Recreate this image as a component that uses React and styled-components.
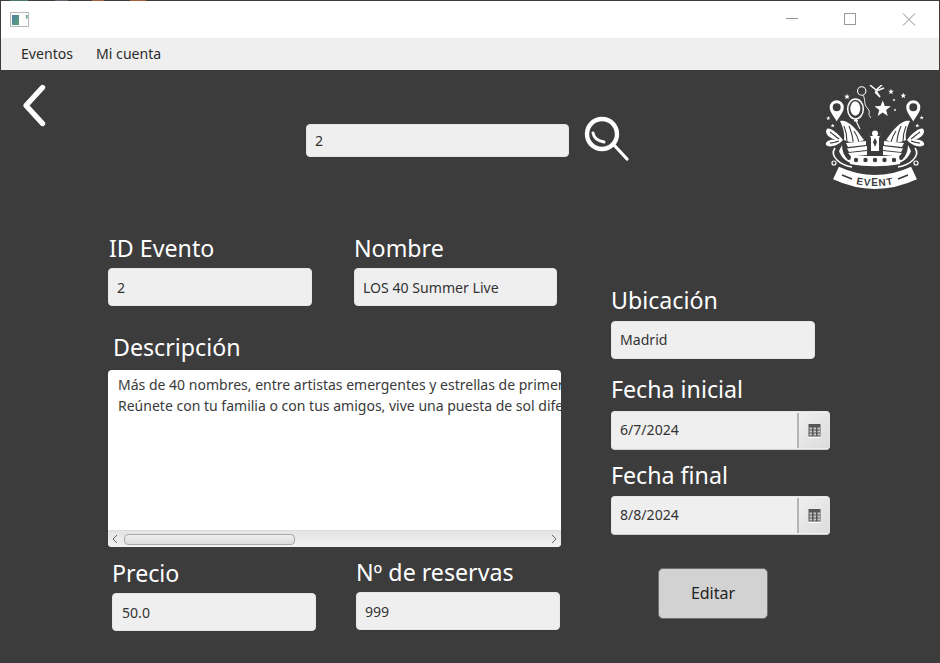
import React from "react";
import styled, { createGlobalStyle } from "styled-components";

const Global = createGlobalStyle`
  html, body { margin: 0; padding: 0; background: #3c3c3c; }
  * { box-sizing: border-box; }
`;

const FONT = `"Noto Sans", "Open Sans", sans-serif`;

const Win = styled.div`
  width: 940px;
  height: 663px;
  display: flex;
  flex-direction: column;
  background: #3c3c3c;
  font-family: ${FONT};
  color: #333;
  overflow: hidden;
`;
const TopEdge = styled.div`
  height: 1px;
  flex: none;
  background: linear-gradient(90deg, #3c3c3c 0 10px, #4d7a6a 10px 28px, #3c3c3c 28px 55px, #6a5f70 55px 68px, #3c3c3c 68px 92px, #a5603a 92px 104px, #3c3c3c 104px 130px, #a5603a 130px 146px, #3c3c3c 146px 940px);
`;
const TitleBar = styled.div`
  height: 37px;
  flex: none;
  margin: 0 1px;
  background: #fff;
  display: flex;
  align-items: center;
  padding-left: 9px;
`;
const Controls = styled.div`
  margin-left: auto;
  display: flex;
`;
const Ctrl = styled.svg`
  width: ${(p) => p.$w || 58}px;
  height: 37px;
  display: block;
`;
const MenuBar = styled.nav`
  height: 32px;
  flex: none;
  margin: 0 1px;
  background: #efefef;
  display: flex;
  align-items: center;
  gap: 23px;
  padding: 0 0 2px 20px;
  font-size: 14.1px;
  color: #2b2b2b;
`;
const Content = styled.main`
  flex: 1;
  display: flex;
  flex-direction: column;
`;
const Header = styled.header`
  height: 162px;
  flex: none;
  display: flex;
  align-items: flex-start;
`;
const BackIcon = styled.svg`
  width: 30px;
  height: 50px;
  margin: 12px 0 0 20px;
  flex: none;
`;
const SearchGroup = styled.div`
  display: flex;
  align-items: flex-start;
  margin: 54px 0 0 256px;
`;
const SearchBox = styled.div`
  width: 263px;
`;
const SearchIcon = styled.svg`
  width: 50px;
  height: 50px;
  margin: -9px 0 0 14px;
  flex: none;
`;
const Logo = styled.svg`
  width: 115px;
  height: 110px;
  margin: 15px 15px 0 auto;
  flex: none;
`;
const Form = styled.div`
  display: flex;
  padding-left: 108px;
  gap: 50px;
`;
const LeftCol = styled.div`
  width: 453px;
  display: flex;
  flex-direction: column;
`;
const RightCol = styled.div`
  width: 219px;
  margin-top: 52px;
  display: flex;
  flex-direction: column;
`;
const FieldRow = styled.div`
  display: flex;
  align-items: flex-start;
  margin-top: ${(p) => p.$top || 0}px;
  padding-left: ${(p) => p.$indent || 0}px;
`;
const Field = styled.div`
  width: ${(p) => p.$w || 204}px;
  margin-left: ${(p) => p.$left || 0}px;
`;
const Label = styled.label`
  display: block;
  font-size: 23.2px;
  line-height: 32px;
  height: ${(p) => p.$h || 36}px;
  padding-left: ${(p) => p.$indent || 0}px;
  margin-top: ${(p) => p.$top || 0}px;
  color: #fff;
  white-space: nowrap;
`;
const Input = styled.div`
  height: ${(p) => p.$h || 38}px;
  width: 100%;
  display: flex;
  align-items: center;
  padding-left: ${(p) => p.$pad || 8}px;
  padding-bottom: ${(p) => p.$lift || 0}px;
  background: #efefef;
  border-radius: 4px;
  border: 1px solid #e6e6e6;
  font-size: 14.1px;
  color: #333;
`;
const TextBox = styled.div`
  height: 177px;
  background: #fff;
  border-radius: 4px;
  overflow: hidden;
  display: flex;
  flex-direction: column;
`;
const TextLines = styled.div`
  flex: 1;
  padding: 4px 0 0 10px;
  font-size: 14.03px;
  line-height: 21px;
  color: #3a3a3a;
  white-space: nowrap;
  overflow: hidden;
`;
const HScroll = styled.div`
  height: 17px;
  flex: none;
  display: flex;
  align-items: center;
  padding: 0 4px;
  background: linear-gradient(#e4e4e4, #f2f2f2);
  border-top: 1px solid #dcdcdc;
`;
const Thumb = styled.div`
  width: 171px;
  height: 11px;
  margin-left: 6px;
  border-radius: 4px;
  border: 1px solid #a9a9a9;
  background: linear-gradient(#efefef, #dcdcdc);
`;
const Arrow = styled.svg`
  width: 6px;
  height: 10px;
  flex: none;
  margin-left: ${(p) => (p.$end ? "auto" : "0")};
`;
const DateBox = styled.div`
  height: 39px;
  display: flex;
  background: #efefef;
  border-radius: 4px;
  border: 1px solid #e6e6e6;
  border-bottom-color: #cfcfcf;
  overflow: hidden;
`;
const DateValue = styled.div`
  flex: 1;
  display: flex;
  align-items: center;
  padding: 0 0 2px 8px;
  font-size: 14.1px;
`;
const DateBtn = styled.div`
  width: 32px;
  display: flex;
  align-items: center;
  justify-content: center;
  margin: 1px 0;
  border-left: 2px solid #b5b5b5;
  background: linear-gradient(135deg, #efefef, #dcdcdc);
`;
const Action = styled.button`
  width: 110px;
  height: 51px;
  margin: 33px 0 0 47px;
  background: #d2d2d2;
  border: 1px solid #6e6e6e;
  border-radius: 5px;
  font-family: ${FONT};
  font-size: 16px;
  color: #222;
  padding: 0 0 2px;
`;

const star = (cx, cy, R, r = R * 0.42) => {
  const pts = [];
  for (let i = 0; i < 10; i++) {
    const a = -Math.PI / 2 + (i * Math.PI) / 5;
    const d = i % 2 ? r : R;
    pts.push(`${(cx + d * Math.cos(a)).toFixed(2)},${(cy + d * Math.sin(a)).toFixed(2)}`);
  }
  return pts.join(" ");
};

const CalIcon = () => (
  <svg width="13" height="14" viewBox="0 0 13 14">
    <rect x="0.5" y="0" width="12" height="12.5" fill="#565656" />
    <rect x="0.5" y="13" width="12" height="1" fill="#fff" />
    <g fill="#c9c9c9">
      {[1, 5, 9].map((x) =>
        [3.5, 6.5, 9.5].map((y) => <rect key={x + "-" + y} x={x + 0.5} y={y} width="2.5" height="2" />)
      )}
    </g>
  </svg>
);

const LogoHalf = () => (
  <g>
    <path fillRule="evenodd" d="M26.7 36.5 C24 31 19.7 27.5 19.7 22.3 A7 7 0 0 1 33.7 22.3 C33.7 27.5 29.5 31 26.7 36.5 Z M26.7 18.3 A4 4 0 1 0 26.7 26.3 A4 4 0 1 0 26.7 18.3 Z" fill="#fff" />
    <path d="M30 36 C37 34 45 42 54 55 C48 58 40 58 34 55 C35 49 33 42 30 36 Z" fill="#fff" />
    <path d="M34 41 C36 46 37 51 37 57 M39 41 C41 46 43 51 43 57 M44 46 C46 49 48 53 49 57" stroke="#3c3c3c" strokeWidth="1.1" fill="none" />
    <path d="M33 55 C27 47 19 42 17 44 C14 47 18 53 26 55 C19 54 15 57 16 60 C19 63 28 61 33 55 Z" fill="#fff" />
    <path d="M20 47 C23 49 26 52 29 54 M20 58 C23 58 26 57 29 56" stroke="#3c3c3c" strokeWidth="1.1" fill="none" />
    <path d="M36 58 L56 56 L56 60 L38 62 Z M37 63.5 L57 61 L57 65 L39 67 Z M38 68 L57 66 L57 70 L41 71.5 Z" fill="#fff" />
    <path d="M32 60 C32 66 34 71 38 75 L44 74 L44 79 C38 78 31 73 29 66 Z" fill="#fff" />
    <path d="M25 63 C22 67 23 71 27 75 C31 79 36 81 42 82" stroke="#fff" strokeWidth="1.6" fill="none" />
    <circle cx="24" cy="78" r="2" fill="none" stroke="#fff" strokeWidth="1.2" />
  </g>
);

const EventLogo = () => (
  <Logo viewBox="0 0 115 110" aria-label="Event">
    <LogoHalf />
    <g transform="translate(130,0) scale(-1,1)">
      <LogoHalf />
    </g>
    <polygon points={star(72.7, 24, 8.6)} fill="#fff" />
    {[
      [37, 11.7, 3],
      [81, 6.7, 3],
      [93.3, 10.7, 3],
      [84, 15, 1.6],
      [18.3, 33.3, 2.2],
      [22.7, 40.7, 2.2],
      [111.7, 32.7, 2.2],
      [107.3, 40.7, 2.2],
      [85, 25, 1.6],
    ].map(([x, y, r]) => (
      <polygon key={x} points={star(x, y, r)} fill="#fff" />
    ))}
    <ellipse cx="45.5" cy="24" rx="7.8" ry="10" fill="none" stroke="#fff" strokeWidth="1.5" />
    <ellipse cx="45.3" cy="23.5" rx="5" ry="7.2" fill="#fff" />
    <path d="M46 34 L44 36 L48 36 Z" fill="#fff" stroke="#fff" />
    <path d="M46 36 L50 44" stroke="#fff" strokeWidth="1.1" fill="none" />
    <circle cx="51.7" cy="6" r="4.2" fill="none" stroke="#fff" strokeWidth="1.1" />
    <path d="M53 10 C56 15 53 19 58 24 C61 27 57 29 61 33" stroke="#fff" strokeWidth="0.9" fill="none" />
    <path d="M60 0 L66 5 M72 0 L66 5 M74 3 L66 6 L70 12 L65 7" stroke="#fff" strokeWidth="1.5" fill="none" />
    <circle cx="65" cy="48.5" r="3" fill="#fff" />
    <path d="M56 42 L61 53 L61 66 L69 66 L69 53 L74 42 L70 51 L60 51 Z" fill="#fff" />
    <path d="M65 53 L63 57 L65 62 L67 57 Z" fill="#3c3c3c" />
    <path d="M41 71 L89 71 L90 79 C74 82 56 82 40 79 Z" fill="#fff" />
    {[46, 55.5, 65, 74.5, 84].map((x) => (
      <circle key={x} cx={x} cy="75" r="2.2" fill="#3c3c3c" />
    ))}
    <path d="M26 88 Q65 106 104 88" stroke="#fff" strokeWidth="14" fill="none" />
    <path id="evRibbon" d="M26 92.5 Q65 110 104 92.5" fill="none" />
    <text fontFamily={`"Liberation Sans", sans-serif`} fontSize="10" fontWeight="700" letterSpacing="1" fill="#3c3c3c" textAnchor="middle">
      <textPath href="#evRibbon" startOffset="50%">EVENT</textPath>
    </text>
    <path d="M32 90 L42 94 M88 94 L98 90" stroke="#3c3c3c" strokeWidth="1.6" />
  </Logo>
);

export default function App() {
  return (
    <Win>
      <Global />
      <TopEdge />
      <TitleBar>
        <svg width="20" height="16" viewBox="0 0 20 16">
          <defs>
            <linearGradient id="appG" x1="0" y1="0" x2="1" y2="1">
              <stop offset="0" stopColor="#4f7fa8" />
              <stop offset="1" stopColor="#5aa371" />
            </linearGradient>
          </defs>
          <rect x="0.5" y="0.5" width="18" height="14" fill="#fdfdfd" stroke="#b9b9b9" />
          <rect x="2" y="3" width="7" height="10" fill="url(#appG)" />
          <rect x="16" y="3" width="1.5" height="3.5" fill="#4f9a96" />
        </svg>
        <Controls>
          <Ctrl viewBox="0 0 58 37">
            <path d="M16 17.5 H28" stroke="#9a9a9a" strokeWidth="1" />
          </Ctrl>
          <Ctrl viewBox="0 0 58 37">
            <rect x="16.5" y="12.5" width="11" height="11" fill="none" stroke="#9a9a9a" />
          </Ctrl>
          <Ctrl $w={53} viewBox="0 0 53 37">
            <path d="M17 12.5 L29 24.5 M29 12.5 L17 24.5" stroke="#8f8f8f" strokeWidth="1" />
          </Ctrl>
        </Controls>
      </TitleBar>
      <MenuBar>
        <span>Eventos</span>
        <span>Mi cuenta</span>
      </MenuBar>
      <Content>
        <Header>
          <BackIcon viewBox="0 0 30 50">
            <path d="M22.5 5.5 L6 23.5 L22.5 41.5" fill="none" stroke="#fff" strokeWidth="5.4" strokeLinecap="round" strokeLinejoin="round" />
          </BackIcon>
          <SearchGroup>
            <SearchBox>
              <Input $h={33}>2</Input>
            </SearchBox>
            <SearchIcon viewBox="0 0 50 50">
              <circle cx="19" cy="19" r="15" fill="none" stroke="#fff" strokeWidth="4.4" />
              <path d="M31 30 L44 44" stroke="#fff" strokeWidth="3.2" strokeLinecap="round" />
              <path d="M10 18 C11 23 15 26 21 27" fill="none" stroke="#fff" strokeWidth="3" strokeLinecap="round" />
            </SearchIcon>
          </SearchGroup>
          <EventLogo />
        </Header>
        <Form>
          <LeftCol>
            <FieldRow>
              <Field>
                <Label $indent={1}>ID Evento</Label>
                <Input>2</Input>
              </Field>
              <Field $w={203} $left={42}>
                <Label>Nombre</Label>
                <Input>LOS 40 Summer Live</Input>
              </Field>
            </FieldRow>
            <Label $indent={5} $top={25} $h={39}>Descripción</Label>
            <TextBox>
              <TextLines>
                <div>Más de 40 nombres, entre artistas emergentes y estrellas de primera línea</div>
                <div>Reúnete con tu familia o con tus amigos, vive una puesta de sol diferente</div>
              </TextLines>
              <HScroll>
                <Arrow viewBox="0 0 6 10">
                  <path d="M5 1 L1 5 L5 9" fill="none" stroke="#666" />
                </Arrow>
                <Thumb />
                <Arrow $end viewBox="0 0 6 10">
                  <path d="M1 1 L5 5 L1 9" fill="none" stroke="#666" />
                </Arrow>
              </HScroll>
            </TextBox>
            <FieldRow $top={10} $indent={4}>
              <Field>
                <Label>Precio</Label>
                <Input $pad={9}>50.0</Input>
              </Field>
              <Field $left={40}>
                <Label $top={-1}>Nº de reservas</Label>
                <Input>999</Input>
              </Field>
            </FieldRow>
          </LeftCol>
          <RightCol>
            <Field>
              <Label $h={37}>Ubicación</Label>
              <Input $lift={2}>Madrid</Input>
            </Field>
            <Label $top={14} $h={38}>Fecha inicial</Label>
            <DateBox>
              <DateValue>6/7/2024</DateValue>
              <DateBtn><CalIcon /></DateBtn>
            </DateBox>
            <Label $top={9} $h={37}>Fecha final</Label>
            <DateBox>
              <DateValue>8/8/2024</DateValue>
              <DateBtn><CalIcon /></DateBtn>
            </DateBox>
            <Action>Editar</Action>
          </RightCol>
        </Form>
      </Content>
    </Win>
  );
}
